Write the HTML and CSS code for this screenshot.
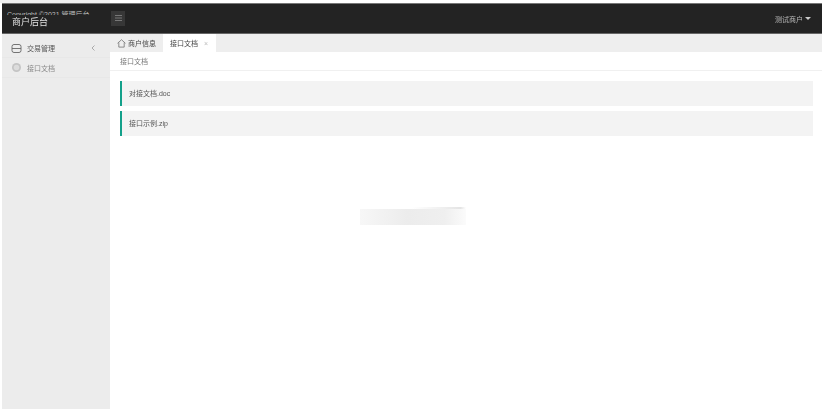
FILE: index.html
```html
<!DOCTYPE html>
<html lang="zh">
<head>
<meta charset="utf-8">
<title>商户后台</title>
<link rel="stylesheet" href="styles.css">
</head>
<body>
<div class="app">
  <div class="strip"><div class="strip-left"></div></div>
  <header class="topbar">
    <div class="brand">
      <div class="copyright"><span>Copyright ©2021 管理后台</span></div>
      <div class="brand-name">商户后台</div>
    </div>
    <div class="topbar-main">
      <button class="menu-btn" aria-label="菜单">
        <svg width="7" height="6" viewBox="0 0 7 6"><path d="M0 .5h7M0 3h7M0 5.5h7" stroke="#777" stroke-width="1" fill="none"/></svg>
      </button>
      <div class="user">测试商户<span class="caret"></span></div>
    </div>
  </header>
  <div class="body">
    <aside class="sidebar">
      <div class="nav-item">
        <svg class="nav-icon" width="11" height="11" viewBox="0 0 11 11" fill="none" stroke="#666" stroke-width=".9"><rect x="1" y="1.5" width="9" height="8" rx="2"/><path d="M1 5.5h9"/></svg>
        <span class="nav-text">交易管理</span>
        <svg class="chev" width="4" height="6" viewBox="0 0 4 6" fill="none" stroke="#999" stroke-width=".8"><path d="M3.5.5 1 3l2.5 2.5"/></svg>
      </div>
      <div class="nav-item sub">
        <svg class="nav-icon" width="11" height="11" viewBox="0 0 11 11"><circle cx="5.5" cy="5.5" r="4.5" fill="#c4c4c4"/><circle cx="5.5" cy="5.5" r="2.8" fill="#dcdcdc"/></svg>
        <span class="nav-text">接口文档</span>
      </div>
    </aside>
    <main class="main">
      <nav class="tabs">
        <div class="tab">
          <svg width="9" height="9" viewBox="0 0 10 10" fill="none" stroke="#666" stroke-width=".8"><path d="M.6 4.8 5 .8l4.4 4M2 4v5h6V4"/></svg>
          <span>商户信息</span>
        </div>
        <div class="tab active"><span>接口文档</span><span class="close">×</span></div>
      </nav>
      <div class="crumb">接口文档</div>
      <section class="files">
        <div class="file">对接文档.doc</div>
        <div class="file">接口示例.zip</div>
      </section>
      <div class="loading"></div>
    </main>
  </div>
</div>
</body>
</html>
```
FILE: styles.css
```css
* { box-sizing: border-box; }
html, body { margin: 0; height: 100%; background: #fff; overflow: hidden; }
body { font-family: "Liberation Sans", "Noto Sans CJK SC", sans-serif; color: #555; }
.app { width: 822px; height: 409px; padding-left: 2px; display: flex; flex-direction: column; filter: blur(.4px); }
.strip { height: 3px; flex: none; margin-left: -2px; }
.strip-left { width: 110px; height: 3px; background: #f0f0f0; }
.topbar { height: 31px; flex: none; display: flex; background: #232323; border-top: 1px solid #777; border-bottom: 1px solid #666; }
.brand { width: 108px; flex: none; padding-left: 5px; padding-top: 6px; color: #ddd; }
.copyright { height: 5px; overflow: hidden; font-size: 7px; line-height: 9px; white-space: nowrap; color: #bbb; }
.brand-name { position: relative; height: 15px; font-size: 9px; line-height: 15px; padding-left: 5px; color: #e0e0e0; background: #232323; white-space: nowrap; }
.topbar-main { flex: 1; display: flex; align-items: center; justify-content: space-between; padding: 0 11px 0 1px; }
.menu-btn { width: 14px; height: 15px; padding: 0; border: 0; background: #373737; display: flex; align-items: center; justify-content: center; margin-top: -1px; }
.user { font-size: 7px; color: #bbb; display: flex; align-items: center; gap: 2px; margin-top: 1px; white-space: nowrap; }
.caret { width: 0; height: 0; border-left: 3px solid transparent; border-right: 3px solid transparent; border-top: 3px solid #ccc; margin-top: -2px; }
.body { flex: 1; display: flex; min-height: 0; }
.sidebar { width: 108px; flex: none; background: #ececec; }
.nav-item { height: 24px; display: flex; align-items: center; padding: 5px 15px 0 9px; gap: 5px; font-size: 7px; color: #555; border-bottom: 1px solid #e8e8e8; }
.nav-item.sub { height: 20px; padding-top: 0; color: #888; }
.nav-icon { flex: none; }
.nav-text { flex: 1; white-space: nowrap; }
.main { flex: 1; min-width: 0; display: flex; flex-direction: column; position: relative; }
.tabs { height: 18px; flex: none; display: flex; background: #eeeeee; }
.tab { display: flex; align-items: center; gap: 2px; padding: 0 7px; font-size: 7px; color: #444; white-space: nowrap; }
.tab.active { background: #fff; gap: 6px; width: 53px; padding: 0 0 0 7px; }
.close { color: #bbb; font-size: 7px; }
.crumb { height: 19px; flex: none; display: flex; align-items: center; padding-left: 10px; font-size: 7px; color: #777; border-bottom: 1px solid #f0f0f0; }
.files { padding: 10px 9px 0 10px; display: flex; flex-direction: column; gap: 5px; }
.file { height: 25px; background: #f3f3f3; border-left: 2px solid #13a08a; padding: 0 0 1px 7px; display: flex; align-items: center; font-size: 7px; color: #555; }
.loading { position: absolute; left: 250px; top: 175px; width: 106px; height: 16px; background: linear-gradient(90deg, #f7f7f7, #ececec 45%, #efefef 80%, #fbfbfb); }
.loading::before { content: ""; position: absolute; left: 52px; right: 0; top: -2px; height: 2px; background: linear-gradient(90deg, #fff, #eee 60%, #e4e4e4 90%, #fff); }
```
